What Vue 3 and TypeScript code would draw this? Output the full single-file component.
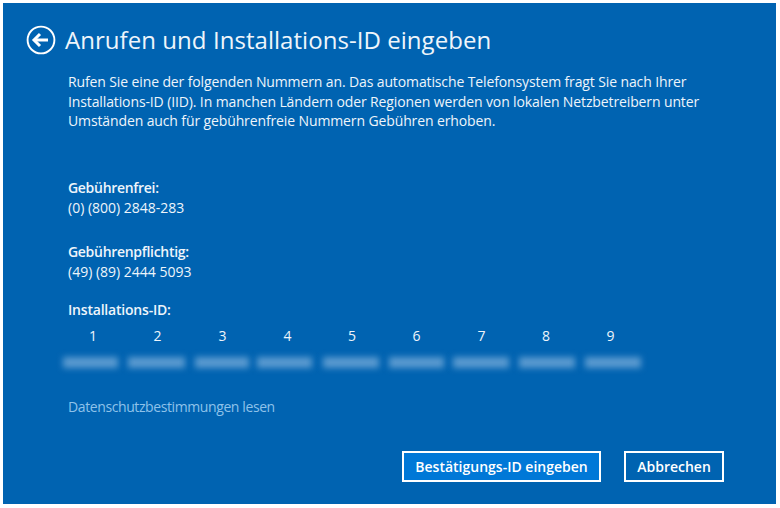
<script setup lang="ts">
// digit column widths and blurred bar spans follow the slightly uneven group spacing
const nums = [1, 2, 3, 4, 5, 6, 7, 8, 9];
const bars = [
  { width: 55, gap: 0 },
  { width: 57, gap: 10 },
  { width: 54, gap: 10 },
  { width: 55, gap: 8 },
  { width: 56, gap: 11 },
  { width: 55, gap: 10 },
  { width: 56, gap: 9 },
  { width: 56, gap: 10 },
  { width: 56, gap: 10 },
];
const numWidths = [64, 65, 65, 65, 64, 65, 65, 64, 65];
</script>

<template>
  <div class="dialog">
    <div class="header">
      <svg class="back" width="30" height="30" viewBox="0 0 30 30" fill="none" stroke="#fff">
        <circle cx="15" cy="15" r="13.4" stroke-width="1.9" />
        <path d="M8 15H22" stroke-width="3" />
        <path d="M14 9l-6 6 6 6" stroke-width="3" />
      </svg>
      <h1>Anrufen und Installations-ID eingeben</h1>
    </div>

    <div class="content">
      <p class="intro">
        Rufen Sie eine der folgenden Nummern an. Das automatische Telefonsystem fragt Sie nach Ihrer<br />
        Installations-ID (IID). In manchen Ländern oder Regionen werden von lokalen Netzbetreibern unter<br />
        Umständen auch für gebührenfreie Nummern Gebühren erhoben.
      </p>

      <div class="block free">
        <strong>Gebührenfrei:</strong>
        <span>(0) (800) 2848-283</span>
      </div>
      <div class="block paid">
        <strong>Gebührenpflichtig:</strong>
        <span>(49) (89) 2444 5093</span>
      </div>

      <strong class="id-label">Installations-ID:</strong>
      <div class="id-nums">
        <span v-for="(n, i) in nums" :key="n" class="num" :style="{ width: numWidths[i] + 'px' }">{{ n }}</span>
      </div>
      <div class="id-bars">
        <span
          v-for="(b, i) in bars"
          :key="i"
          class="blur"
          :style="{ width: b.width + 'px', marginLeft: b.gap + 'px' }"
        ></span>
      </div>

      <a class="privacy">Datenschutzbestimmungen lesen</a>
    </div>

    <div class="actions">
      <button class="primary">Bestätigungs-ID eingeben</button>
      <button>Abbrechen</button>
    </div>
  </div>
</template>

<style scoped>
.dialog { box-sizing: border-box; width: 773px; height: 501px; margin: 3px 0 0 3px; background: #0063b1; color: #eef5fb; font-family: "Open Sans", "Noto Sans", sans-serif; font-size: 14px; display: flex; flex-direction: column; overflow: hidden; }
.header { display: flex; align-items: center; gap: 9px; padding: 21px 0 0 23px; }
.back { flex: none; }
h1 { margin: 0; font-size: 24px; font-weight: 400; line-height: 32px; letter-spacing: 0.05px; }
.content { display: flex; flex-direction: column; align-items: flex-start; padding: 0 0 0 65px; flex: 1; }
.intro { margin: 16px 0 0; line-height: 19.5px; white-space: nowrap; letter-spacing: -0.12px; }
.block { display: flex; flex-direction: column; line-height: 20px; }
.free { margin-top: 47px; }
.paid { margin-top: 24px; }
strong { font-weight: 600; letter-spacing: -0.3px; }
.id-label { margin-top: 18px; line-height: 20px; letter-spacing: -0.2px; }
.id-nums { display: flex; margin: 6px 0 0 -7px; }
.num { line-height: 20px; text-align: center; }
.id-bars { display: flex; margin: 11px 0 0 -5px; }
.blur { height: 11px; background: #5a9ad0; filter: blur(3px); }
.privacy { margin-top: 29px; color: #8ec2ea; line-height: 20px; letter-spacing: -0.4px; }
.actions { display: flex; justify-content: flex-end; gap: 23px; padding: 0 52px 22px 0; }
button { box-sizing: border-box; height: 31px; padding: 0; border: 2px solid #fff; background: transparent; color: #fff; font: 600 14px "Open Sans", sans-serif; }
.primary { width: 199px; background: #0078d7; }
button:not(.primary) { width: 100px; }
</style>
